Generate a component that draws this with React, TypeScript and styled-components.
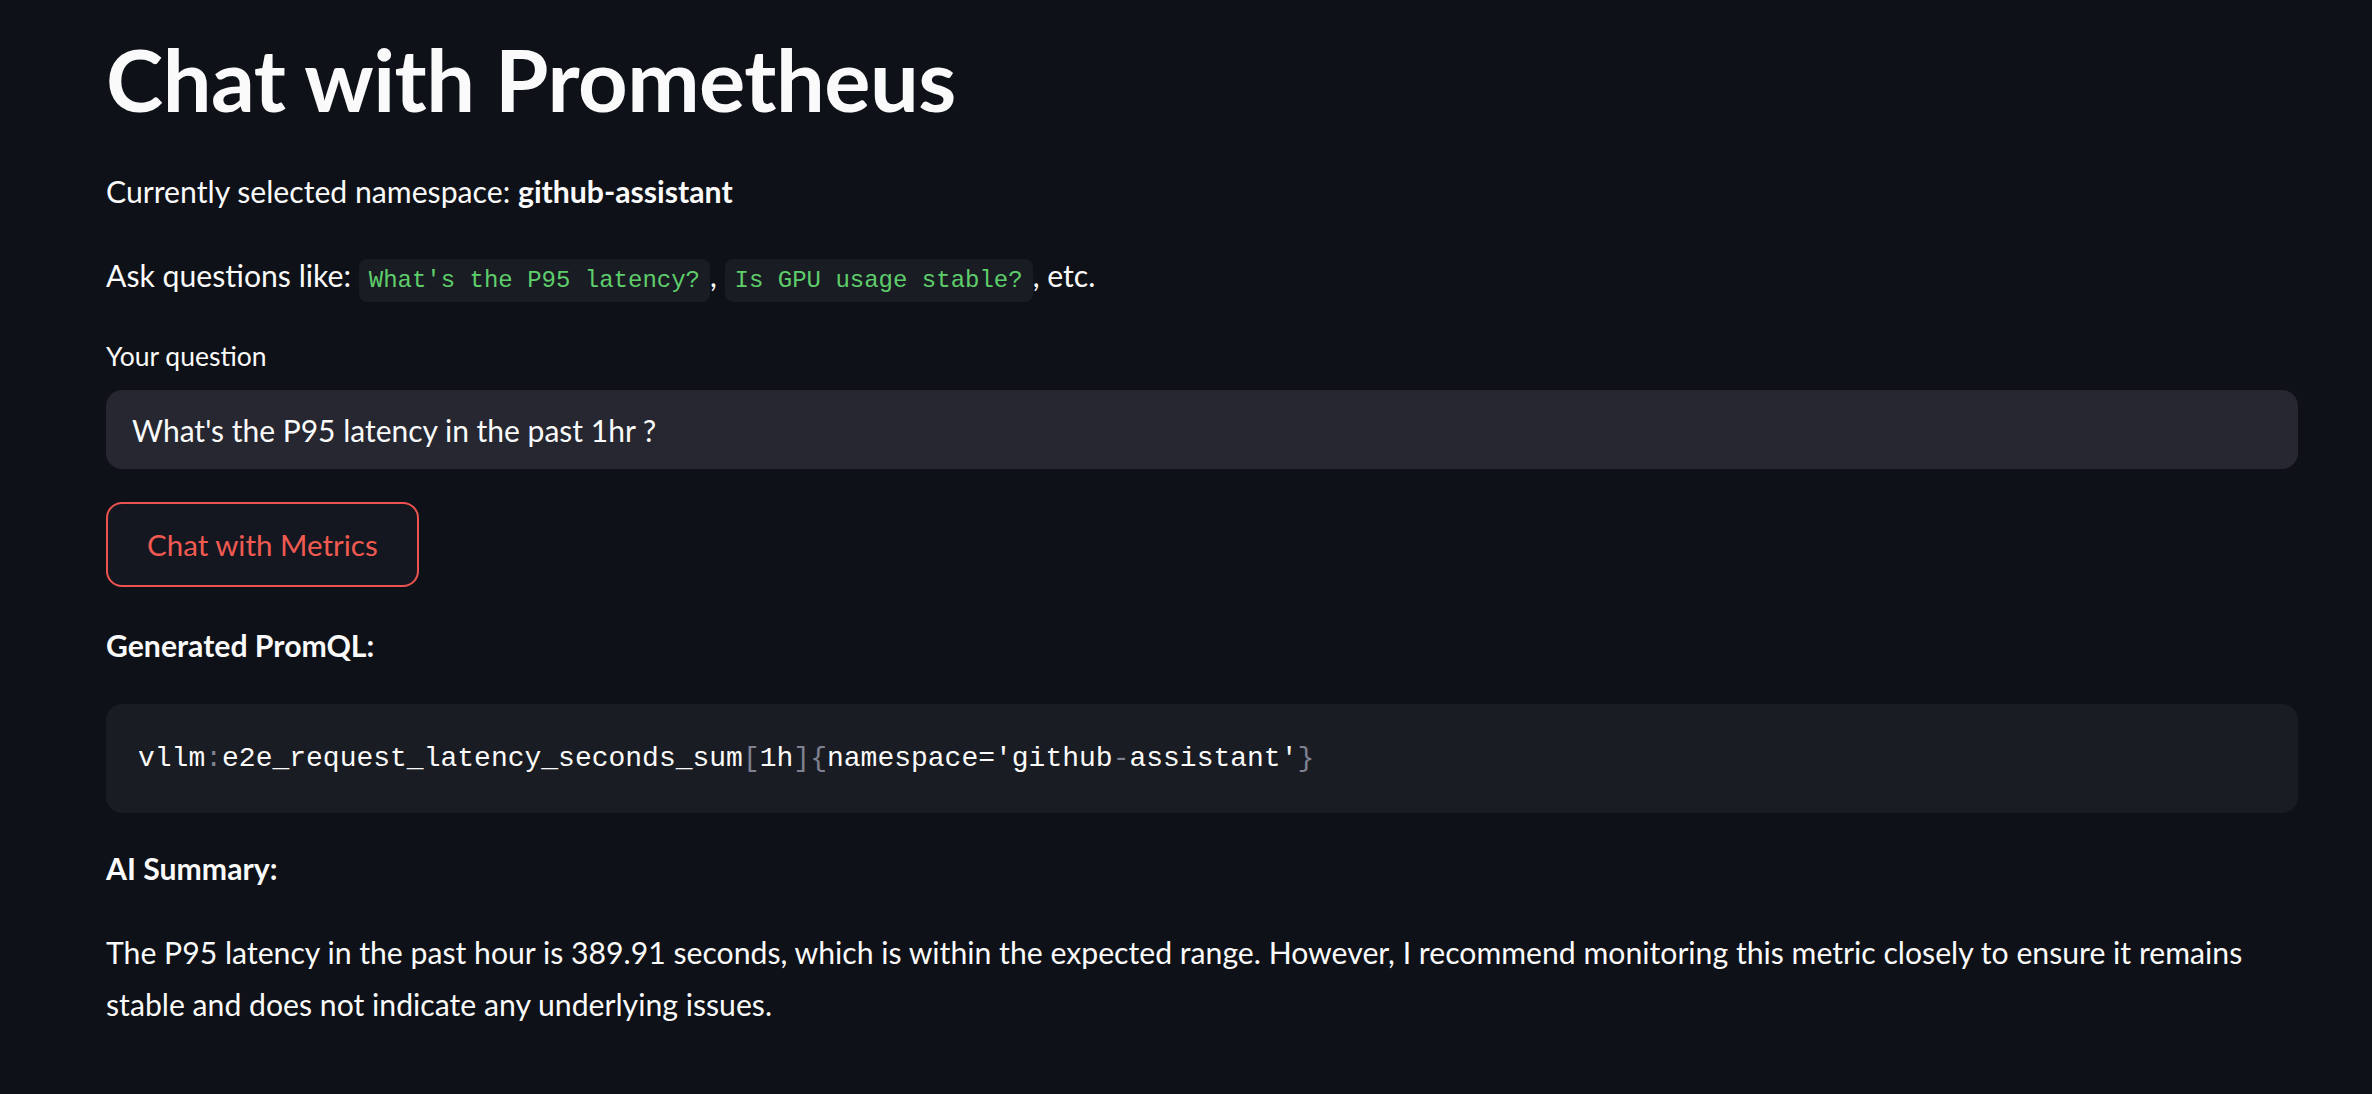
import React from "react";
import styled, { createGlobalStyle } from "styled-components";

const GlobalStyle = createGlobalStyle`
  html, body {
    margin: 0;
    padding: 0;
    background: #0e1117;
  }
  body {
    font-family: Lato, "Noto Sans", sans-serif;
    color: #fafafa;
  }
  * { box-sizing: border-box; }
`;

const Page = styled.main`
  min-height: 1094px;
  background: #0e1117;
  padding: 29px 74px 0 106px;
`;

const Stack = styled.div`
  display: flex;
  flex-direction: column;
  gap: 33px;
  width: 2192px;
`;

const Title = styled.h1`
  margin: 0 0 3px 0;
  font-size: 86.5px;
  line-height: 100.8px;
  font-weight: 700;
  letter-spacing: -0.5px;
`;

const Para = styled.p`
  margin: 0;
  font-size: 30.2px;
  line-height: 51.2px;
  font-weight: 400;
`;

const Strong = styled.strong`
  font-weight: 700;
`;

const InlineCode = styled.code`
  font-family: "Liberation Mono", "DejaVu Sans Mono", monospace;
  font-size: 24px;
  line-height: 1;
  color: #5ece6b;
  background: #1a1c23;
  border-radius: 8px;
  padding: 8px 10px;
`;

const Field = styled.div`
  display: flex;
  flex-direction: column;
  gap: 11px;
`;

const Label = styled.label`
  font-size: 26.5px;
  line-height: 44.8px;
`;

const Input = styled.div`
  height: 79px;
  border-radius: 16px;
  background: #262730;
  display: flex;
  align-items: center;
  padding: 0 26px;
  font-size: 30px;
`;

const Button = styled.button`
  align-self: flex-start;
  height: 85px;
  padding: 0 39px;
  border: 2px solid #ec5350;
  border-radius: 16px;
  background: #141720;
  color: #f15a51;
  font-family: Lato, "Noto Sans", sans-serif;
  font-size: 29.5px;
`;

const CodeBlock = styled.pre`
  margin: 0 0 -3px 0;
  padding: 32px;
  border-radius: 16px;
  background: #1a1c23;
  font-family: "Liberation Mono", "DejaVu Sans Mono", monospace;
  font-size: 28px;
  line-height: 45px;
  color: #fafafa;
`;

const Punct = styled.span`
  color: #7e8191;
`;

export default function App() {
  return (
    <>
      <GlobalStyle />
      <Page>
        <Stack>
          <Title>Chat with Prometheus</Title>
          <Para>
            Currently selected namespace: <Strong>github-assistant</Strong>
          </Para>
          <Para>
            Ask questions like: <InlineCode>What's the P95 latency?</InlineCode>,{" "}
            <InlineCode>Is GPU usage stable?</InlineCode>, etc.
          </Para>
          <Field>
            <Label>Your question</Label>
            <Input>What's the P95 latency in the past 1hr ?</Input>
          </Field>
          <Button>Chat with Metrics</Button>
          <Para>
            <Strong>Generated PromQL:</Strong>
          </Para>
          <CodeBlock>
            vllm<Punct>:</Punct>e2e_request_latency_seconds_sum<Punct>[</Punct>1h
            <Punct>]</Punct>
            <Punct>{"{"}</Punct>namespace='github<Punct>-</Punct>assistant'
            <Punct>{"}"}</Punct>
          </CodeBlock>
          <Para>
            <Strong>AI Summary:</Strong>
          </Para>
          <Para>
            The P95 latency in the past hour is 389.91 seconds, which is within the expected range.
            However, I recommend monitoring this metric closely to ensure it remains stable and does
            not indicate any underlying issues.
          </Para>
        </Stack>
      </Page>
    </>
  );
}
